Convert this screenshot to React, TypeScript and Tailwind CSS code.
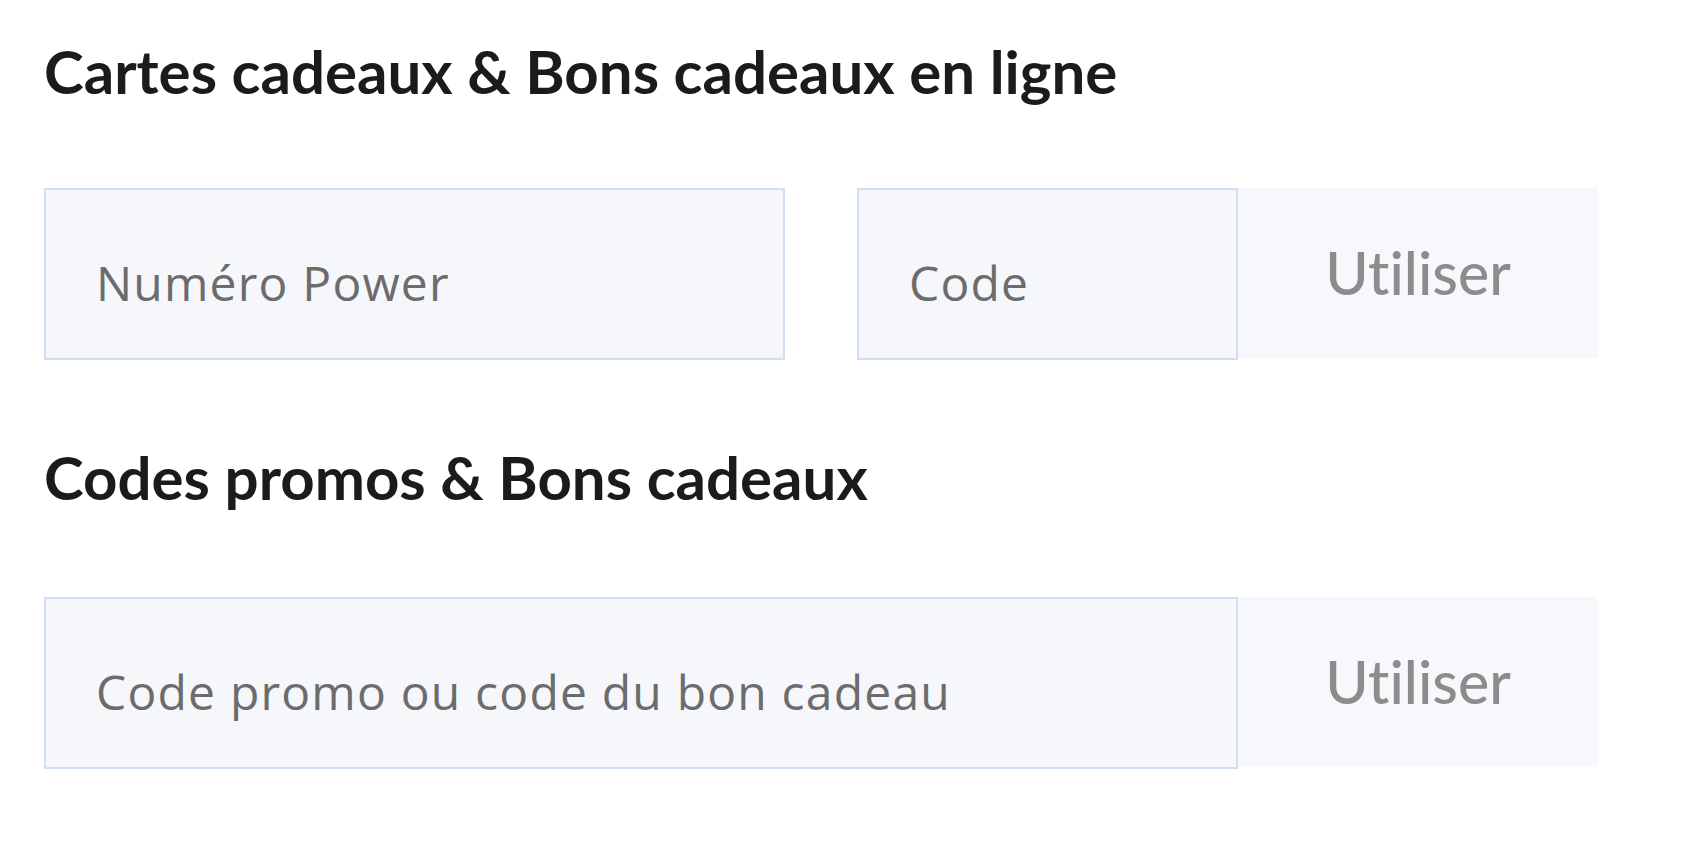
import React, { useState } from 'react';

function CodeInput({ placeholder, className }: { placeholder: string; className: string }) {
  const [value, setValue] = useState('');
  return (
    <input
      value={value}
      onChange={(e) => setValue(e.target.value)}
      placeholder={placeholder}
      className={`h-[172px] border-2 border-[#d2def3] bg-[#f5f7fb] pl-[50px] pt-[16px] font-['Open_Sans',sans-serif] text-[48px] tracking-[1.2px] text-[#555] placeholder:text-[#6c6c6c] outline-none ${className}`}
    />
  );
}

function UseButton() {
  return (
    <button className="w-[360px] h-[170px] bg-[#f7f8fb] text-[59px] text-[#8c8c8c] font-medium [font-variant-ligatures:none]">
      Utiliser
    </button>
  );
}

export default function App() {
  return (
    <div className="min-h-screen bg-white px-[44px] pt-[35px] font-['Lato',sans-serif]">
      <h2 className="text-[60px] leading-[1.2] font-bold text-[#1b1b1b]">
        Cartes cadeaux &amp; Bons cadeaux en ligne
      </h2>

      <div className="flex items-start mt-[81px]">
        <CodeInput placeholder="Numéro Power" className="w-[741px]" />
        <CodeInput placeholder="Code" className="w-[381px] ml-[72px]" />
        <UseButton />
      </div>

      <h2 className="mt-[81px] text-[60px] leading-[1.2] font-bold text-[#1b1b1b]">
        Codes promos &amp; Bons cadeaux
      </h2>

      <div className="flex items-start mt-[84px]">
        <CodeInput placeholder="Code promo ou code du bon cadeau" className="w-[1194px]" />
        <UseButton />
      </div>
    </div>
  );
}
